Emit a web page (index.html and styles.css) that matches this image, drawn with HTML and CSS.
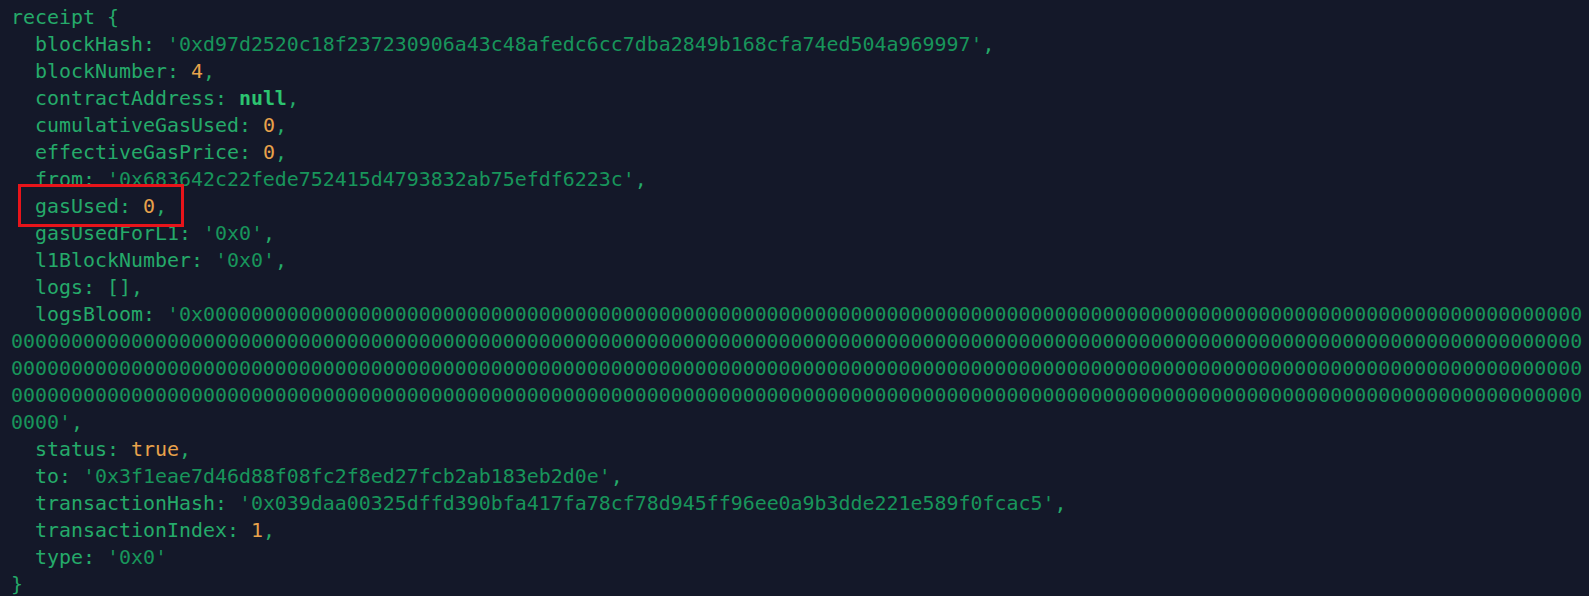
FILE: index.html
```html
<!DOCTYPE html>
<html>
<head>
<meta charset="utf-8">
<link rel="stylesheet" href="styles.css">
</head>
<body>
<pre class="term"><span class="k">receipt {</span>
<span class="k">  blockHash: </span><span class="s">'0xd97d2520c18f237230906a43c48afedc6cc7dba2849b168cfa74ed504a969997'</span><span class="k">,</span>
<span class="k">  blockNumber: </span><span class="n">4</span><span class="k">,</span>
<span class="k">  contractAddress: </span><span class="b">null</span><span class="k">,</span>
<span class="k">  cumulativeGasUsed: </span><span class="n">0</span><span class="k">,</span>
<span class="k">  effectiveGasPrice: </span><span class="n">0</span><span class="k">,</span>
<span class="k">  from: </span><span class="s">'0x683642c22fede752415d4793832ab75efdf6223c'</span><span class="k">,</span>
  <span class="mark"><span class="k">gasUsed: </span><span class="n">0</span><span class="k">,</span></span>
<span class="k">  gasUsedForL1: </span><span class="s">'0x0'</span><span class="k">,</span>
<span class="k">  l1BlockNumber: </span><span class="s">'0x0'</span><span class="k">,</span>
<span class="k">  logs: [],</span>
<span class="k">  logsBloom: </span><span class="s">'0x0000000000000000000000000000000000000000000000000000000000000000000000000000000000000000000000000000000000000000000
00000000000000000000000000000000000000000000000000000000000000000000000000000000000000000000000000000000000000000000000000000000000
00000000000000000000000000000000000000000000000000000000000000000000000000000000000000000000000000000000000000000000000000000000000
00000000000000000000000000000000000000000000000000000000000000000000000000000000000000000000000000000000000000000000000000000000000
0000'</span><span class="k">,</span>
<span class="k">  status: </span><span class="n">true</span><span class="k">,</span>
<span class="k">  to: </span><span class="s">'0x3f1eae7d46d88f08fc2f8ed27fcb2ab183eb2d0e'</span><span class="k">,</span>
<span class="k">  transactionHash: </span><span class="s">'0x039daa00325dffd390bfa417fa78cf78d945ff96ee0a9b3dde221e589f0fcac5'</span><span class="k">,</span>
<span class="k">  transactionIndex: </span><span class="n">1</span><span class="k">,</span>
<span class="k">  type: </span><span class="s">'0x0'</span>
<span class="k">}</span></pre>
</body>
</html>
```

FILE: styles.css
```css
html, body {
  margin: 0;
  padding: 0;
  background: #141829;
  height: 100%;
  overflow: hidden;
}

.term {
  margin: 0;
  padding: 4px 0 0 11px;
  font-family: "DejaVu Sans Mono", "Liberation Mono", monospace;
  font-size: 19.93px;
  line-height: 27px;
  color: #25aa6a;
  white-space: pre;
}

.k { color: #25aa6a; }
.s { color: #18955b; }
.n { color: #e8a24b; }
.b { color: #2cc470; font-weight: bold; }

.mark {
  position: relative;
}

.mark::before {
  content: "";
  position: absolute;
  left: -17px;
  right: -17px;
  top: -11px;
  bottom: -9px;
  border: 3px solid #e8141a;
  pointer-events: none;
}
```
